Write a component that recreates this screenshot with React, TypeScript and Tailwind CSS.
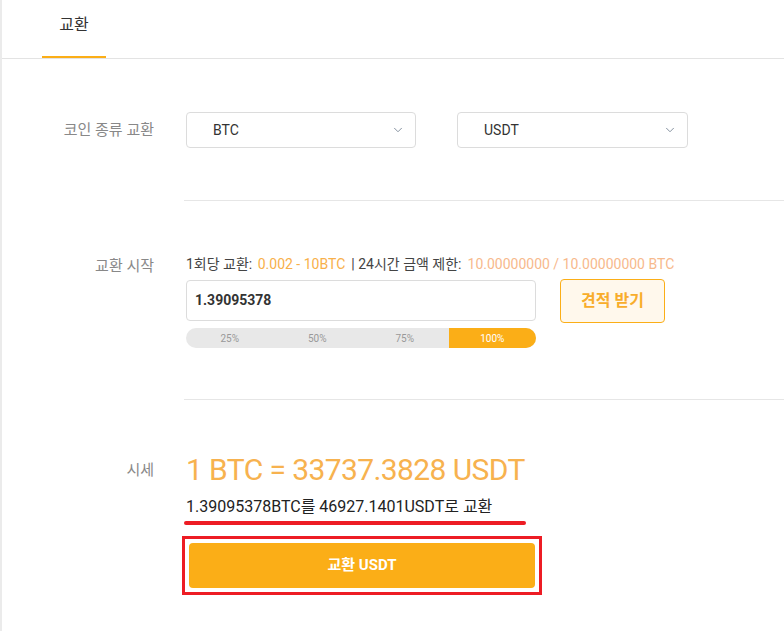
import { ChevronDown } from "lucide-react";

const font = { fontFamily: '"Roboto", "Noto Sans CJK KR", sans-serif' };

function Select({ value, width }: { value: string; width: string }) {
	return (
		<div
			className={`flex h-[36px] ${width} items-center justify-between rounded-[4px] border border-[#dcdcdc] bg-white pl-[26px] pr-[10px] text-[14px] text-[#333]`}
		>
			<span>{value}</span>
			<ChevronDown className="h-[14px] w-[14px] text-[#7d8a99]" strokeWidth={1.6} />
		</div>
	);
}

export default function App() {
	const steps = ["25%", "50%", "75%", "100%"];
	return (
		<div
			style={font}
			className="min-h-[631px] w-[784px] border-l-2 border-[#ebebeb] bg-white"
		>
			<div className="flex h-[59px] border-b border-[#e3e3e3]">
				<div className="ml-[40px] flex w-[64px] items-start justify-center border-b-2 border-[#fbae17] pt-[13px] text-[16px] text-[#333]">
					교환
				</div>
			</div>

			<div className="mt-[53px] flex items-center">
				<div className="w-[152px] text-right text-[15px] text-[#888]">코인 종류 교환</div>
				<div className="ml-[32px] flex gap-[41px]">
					<Select value="BTC" width="w-[230px]" />
					<Select value="USDT" width="w-[231px]" />
				</div>
			</div>

			<div className="ml-[182px] mt-[52px] h-px bg-[#e6e6e6]" />

			<div className="mt-[53px] flex">
				<div className="w-[152px] pt-[1px] text-right text-[15px] text-[#888]">교환 시작</div>
				<div className="ml-[32px]">
					<div className="text-[14px] text-[#444]">
						1회당 교환: <span className="ml-[2px] text-[#f8b04a]">0.002 - 10BTC</span>
						<span className="ml-[6px]">| 24시간 금액 제한:</span>
						<span className="ml-[6px] text-[#f7b98c]">10.00000000 / 10.00000000 BTC</span>
					</div>
					<div className="mt-[5px] flex items-start gap-[24px]">
						<div>
							<div className="flex h-[41px] w-[350px] items-center rounded-[4px] border border-[#dcdcdc] pl-[8px] text-[14px] font-bold text-[#333]">
								1.39095378
							</div>
							<div className="mt-[7px] flex h-[20px] w-[350px] overflow-hidden rounded-full bg-[#e8e8e8] text-[10px]">
								{steps.map((s, i) => (
									<div
										key={s}
										className={`flex flex-1 items-center justify-center ${
											i === 3 ? "bg-[#fbae17] text-white" : "text-[#999]"
										}`}
									>
										{s}
									</div>
								))}
							</div>
						</div>
						<button className="-mt-[1px] h-[44px] w-[105px] rounded-[4px] border border-[#fbae17] bg-[#fff8ec] text-[16px] font-bold text-[#f8ad2b]">
							견적 받기
						</button>
					</div>
				</div>
			</div>

			<div className="ml-[182px] mt-[51px] h-px bg-[#e6e6e6]" />

			<div className="mt-[52px] flex">
				<div className="w-[152px] pt-[7px] text-right text-[15px] text-[#888]">시세</div>
				<div className="ml-[32px]">
					<div className="text-[30px] leading-[36px] tracking-[-0.6px] text-[#f7b24f]">
						1 BTC = 33737.3828 USDT
					</div>
					<div className="mt-[8px] text-[16px] leading-[22px] text-[#222]">
						1.39095378BTC를 46927.1401USDT로 교환
					</div>
					<div className="ml-[-2px] mt-[3px] h-[4px] w-[342px] rounded-full bg-[#ed1c24]" />
					<div className="ml-[-4px] mt-[11px] w-[360px] border-[3px] border-[#ed1c24] p-[4px]">
						<button className="h-[45px] w-full rounded-[4px] bg-[#fbae17] text-[15px] font-bold text-white">
							교환 USDT
						</button>
					</div>
				</div>
			</div>
		</div>
	);
}
